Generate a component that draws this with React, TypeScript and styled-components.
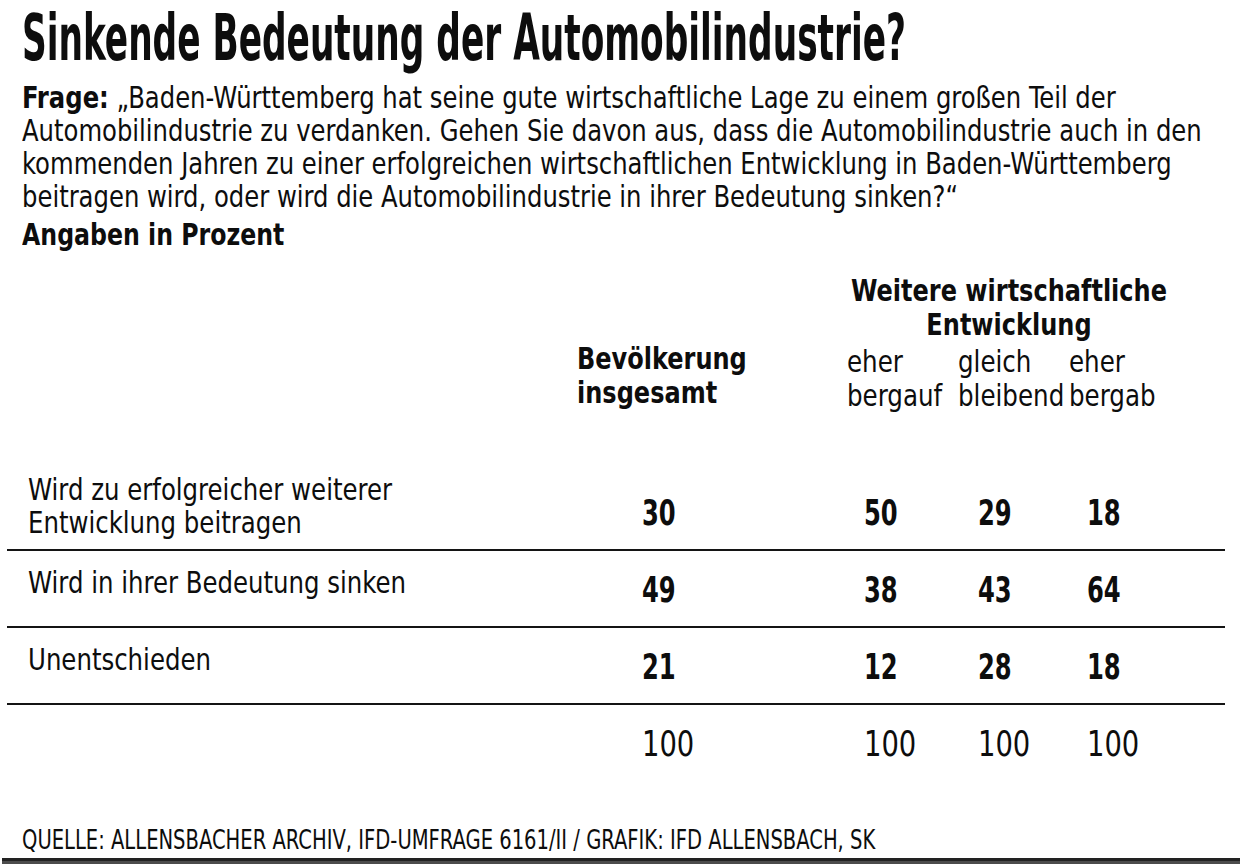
import React from "react";
import styled, { createGlobalStyle } from "styled-components";

const Global = createGlobalStyle`
  html, body { margin: 0; padding: 0; background: #fff; }
  body {
    font-family: "Liberation Sans Narrow", "DejaVu Sans Condensed", "Liberation Sans", sans-serif;
    color: #0d0d0d;
  }
`;

const Page = styled.div`
  width: 1240px;
  height: 864px;
  overflow: hidden;
  display: flex;
  flex-direction: column;
  background: #fff;
`;

const TitleWrap = styled.div`
  height: 64px;
`;

const Title = styled.h1`
  display: inline-block;
  margin: 0 0 0 22px;
  font-size: 40px;
  line-height: 47px;
  font-weight: 700;
  white-space: nowrap;
  transform: scale(0.955, 1.62);
  transform-origin: left top;
`;

const Intro = styled.div`
  padding-left: 22px;
  margin-top: 17px;
  font-size: 30px;
  line-height: 33px;
`;

const Line = styled.div<{ $s?: number }>`
  white-space: nowrap;
  transform: scaleX(${(p) => p.$s ?? 0.9});
  transform-origin: left center;
`;

const Strong = styled.span`
  font-weight: 700;
`;

const Note = styled.div`
  font-weight: 700;
  margin-top: 5px;
  white-space: nowrap;
  transform: scaleX(0.876);
  transform-origin: left center;
`;

const Table = styled.div`
  margin-left: 7px;
  width: 1218px;
  display: flex;
  flex-direction: column;
`;

const cols = "570px 270px 111px 111px 156px";

const Head = styled.div`
  display: grid;
  grid-template-columns: ${cols};
  margin-top: 23px;
  height: 200px;
  align-content: start;
  font-size: 30px;
  line-height: 34px;
`;

const GroupTitle = styled.div`
  grid-column: 3 / 6;
  margin: 0 24px 0 -30px;
  font-weight: 700;
  text-align: center;
  white-space: nowrap;
  transform: scaleX(0.89);
  transform-origin: center center;
`;

const ColHead = styled.div<{ $bold?: boolean; $col: number }>`
  grid-column: ${(p) => p.$col};
  font-weight: ${(p) => (p.$bold ? 700 : 400)};
  padding-top: ${(p) => (p.$bold ? 0 : 3)}px;
  white-space: nowrap;
  transform: scaleX(${(p) => (p.$bold ? 0.89 : 0.91)});
  transform-origin: left center;
`;

const Row = styled.div<{ $line?: boolean }>`
  display: grid;
  grid-template-columns: ${cols};
  align-items: center;
  height: 75px;
  border-bottom: ${(p) => (p.$line ? "2px solid #141414" : "2px solid transparent")};
`;

const Label = styled.div`
  margin-left: 21px;
  margin-top: -12px;
  font-size: 30px;
  line-height: 33px;
`;

const Num = styled.div<{ $pad: number; $bold?: boolean }>`
  margin-left: ${(p) => p.$pad}px;
  padding-top: 3px;
  font-size: 35px;
  line-height: 40px;
  font-weight: ${(p) => (p.$bold ? 700 : 400)};
  transform: scaleX(${(p) => (p.$bold ? 0.77 : 0.87)});
  transform-origin: left center;
`;

const Source = styled.div`
  margin: auto 0 3px 22px;
  font-size: 26px;
  line-height: 30px;
  white-space: nowrap;
  transform: scaleX(0.836);
  transform-origin: left center;
`;

const Bar = styled.div`
  height: 6px;
  margin-left: 2px;
  border-top: 3px solid #222;
  background: #4c4c4c;
  box-sizing: border-box;
`;

const pads = [65, 17, 20, 18];

type RowData = { label: string[]; values: number[] };

const rows: RowData[] = [
  { label: ["Wird zu erfolgreicher weiterer", "Entwicklung beitragen"], values: [30, 50, 29, 18] },
  { label: ["Wird in ihrer Bedeutung sinken"], values: [49, 38, 43, 64] },
  { label: ["Unentschieden"], values: [21, 12, 28, 18] },
];

export default function App() {
  return (
    <>
      <Global />
      <Page>
        <TitleWrap>
          <Title>Sinkende Bedeutung der Automobilindustrie?</Title>
        </TitleWrap>
        <Intro>
          <Line>
            <Strong>Frage:</Strong> „Baden-Württemberg hat seine gute wirtschaftliche Lage zu einem großen Teil der
          </Line>
          <Line>Automobilindustrie zu verdanken. Gehen Sie davon aus, dass die Automobilindustrie auch in den</Line>
          <Line>kommenden Jahren zu einer erfolgreichen wirtschaftlichen Entwicklung in Baden-Württemberg</Line>
          <Line>beitragen wird, oder wird die Automobilindustrie in ihrer Bedeutung sinken?“</Line>
          <Note>Angaben in Prozent</Note>
        </Intro>
        <Table>
          <Head>
            <GroupTitle>
              Weitere wirtschaftliche
              <br />
              Entwicklung
            </GroupTitle>
            <ColHead $col={2} $bold>
              Bevölkerung
              <br />
              insgesamt
            </ColHead>
            <ColHead $col={3}>
              eher
              <br />
              bergauf
            </ColHead>
            <ColHead $col={4}>
              gleich
              <br />
              bleibend
            </ColHead>
            <ColHead $col={5}>
              eher
              <br />
              bergab
            </ColHead>
          </Head>
          {rows.map((r) => (
            <Row key={r.label[0]} $line>
              <Label>
                {r.label.map((l) => (
                  <Line key={l} $s={0.905}>
                    {l}
                  </Line>
                ))}
              </Label>
              {r.values.map((v, i) => (
                <Num key={i} $pad={pads[i]} $bold>
                  {v}
                </Num>
              ))}
            </Row>
          ))}
          <Row>
            <div />
            {pads.map((p, i) => (
              <Num key={i} $pad={p}>
                100
              </Num>
            ))}
          </Row>
        </Table>
        <Source>QUELLE: ALLENSBACHER ARCHIV, IFD-UMFRAGE 6161/II / GRAFIK: IFD ALLENSBACH, SK</Source>
        <Bar />
      </Page>
    </>
  );
}
